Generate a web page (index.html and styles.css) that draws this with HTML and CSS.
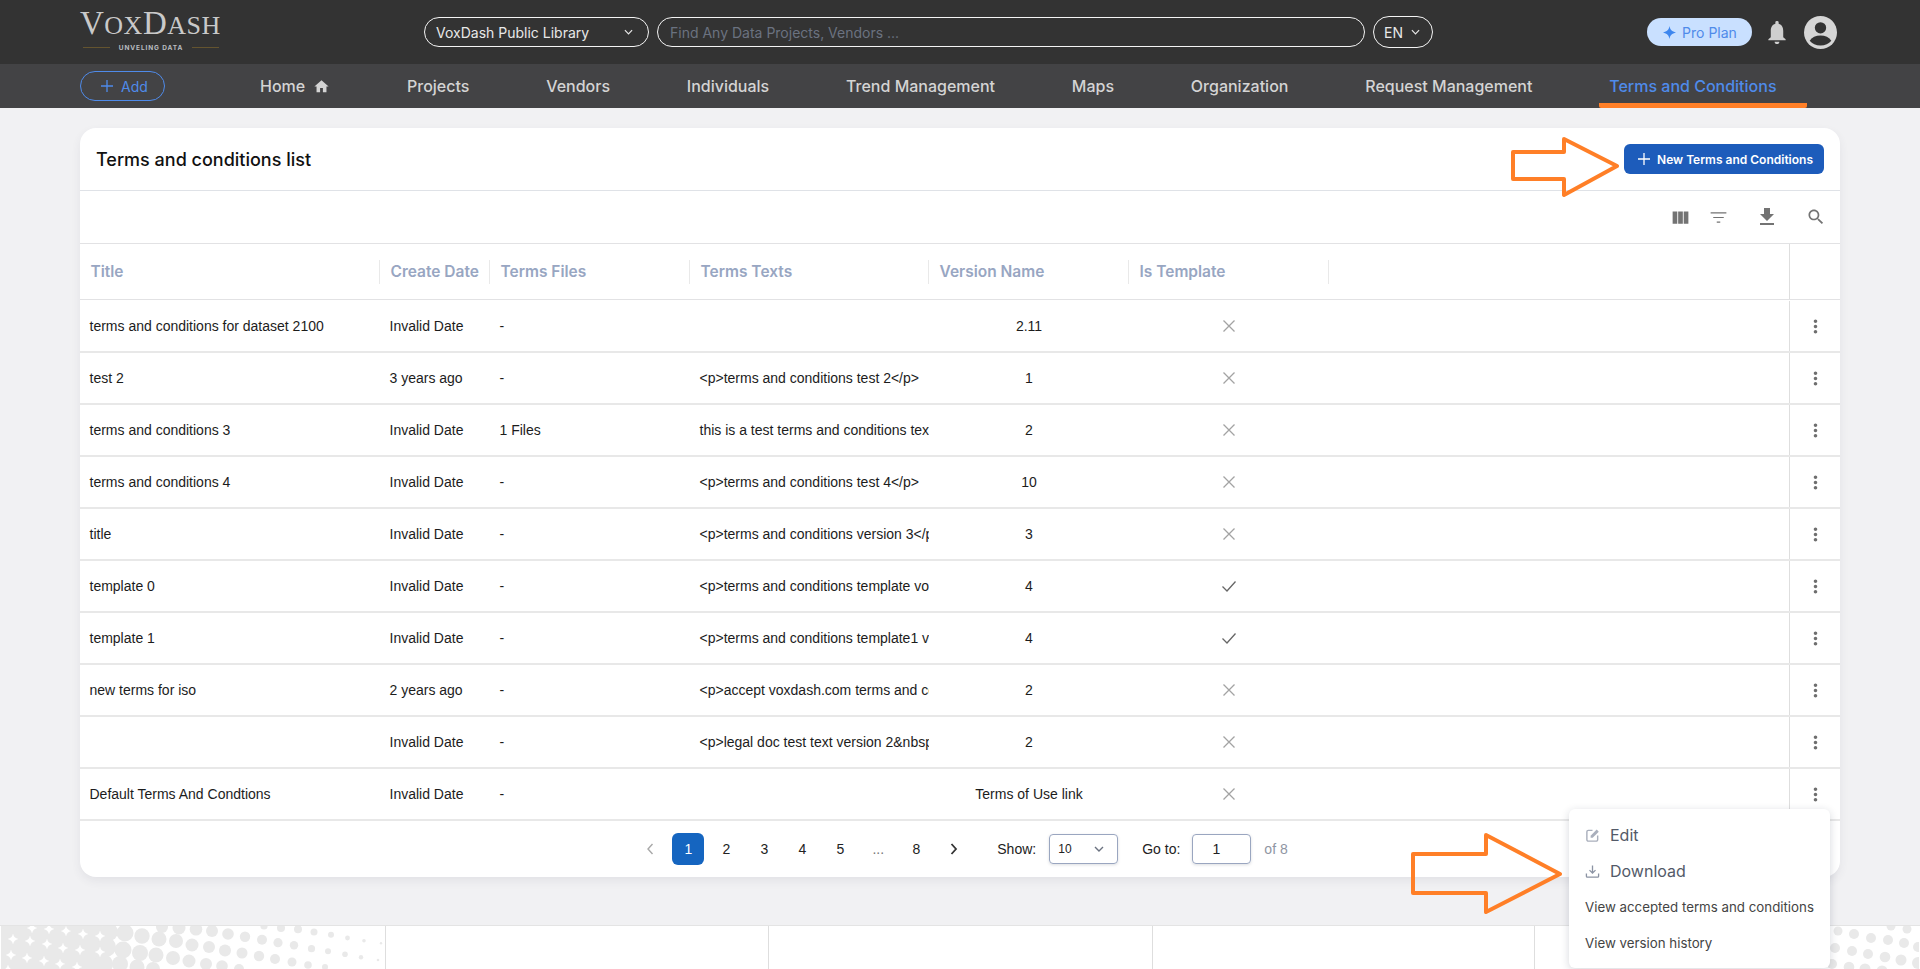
FILE: index.html
```html
<!DOCTYPE html>
<html lang="en">
<head>
<meta charset="utf-8">
<title>Terms and conditions list</title>
<link rel="stylesheet" href="styles.css">
</head>
<body>
<header class="topbar">
  <div class="logo">
    <div class="logo-word"><span class="logo-big">V</span>OX<span class="logo-big">D</span>ASH</div>
    <div class="logo-sub"><span class="logo-line"></span><span class="logo-tag">UNVELING DATA</span><span class="logo-line"></span></div>
  </div>
  <div class="pill pill-lib"><span>VoxDash Public Library</span><svg class="chev" viewBox="0 0 10 6"><path d="M1 1l4 4 4-4"/></svg></div>
  <div class="pill pill-search"><span class="placeholder">Find Any Data Projects, Vendors ...</span></div>
  <div class="pill pill-lang"><span>EN</span><svg class="chev" viewBox="0 0 10 6"><path d="M1 1l4 4 4-4"/></svg></div>
  <div class="top-right">
    <div class="pro"><svg class="pro-star" viewBox="0 0 14 14"><path d="M7 0c.7 4 2.500 6 7 7-4.500 1-6.300 3-7 7-.7-4-2.500-6-7-7 4.500-1 6.300-3 7-7z"/></svg>Pro Plan</div>
    <svg class="bell" viewBox="0 0 18 24"><path d="M9 24c1.400 0 2.500-1 2.500-2.400h-5C6.500 23 7.600 24 9 24zM15.500 17v-6.500c0-3.800-1.300-6.800-4.800-7.700V2A1.700 1.700 0 0 0 9 0a1.700 1.700 0 0 0-1.700 2v.8C3.800 3.700 2.500 6.700 2.500 10.500V17L0 19v1h18v-1z"/></svg>
    <svg class="avatar" viewBox="0 0 32 32"><circle cx="16" cy="16" r="16" fill="#d6d6d6"/><circle cx="16" cy="11.500" r="5.500" fill="#333"/><path d="M5.500 24c2-3.300 6-5 10.500-5s8.500 1.700 10.500 5c-2.500 3-6 4.600-10.500 4.600S8 27 5.500 24z" fill="#333"/></svg>
  </div>
</header>

<nav class="navbar">
  <div class="add-btn"><svg class="add-plus" viewBox="0 0 14 14"><path d="M7 1v12M1 7h12"/></svg>Add</div>
  <div class="nav-items">
    <a class="nav-item">Home<svg class="home" viewBox="0 0 24 24"><path d="M10 20v-6h4v6h5v-8h3L12 3 2 12h3v8z"/></svg></a>
    <a class="nav-item">Projects</a>
    <a class="nav-item">Vendors</a>
    <a class="nav-item">Individuals</a>
    <a class="nav-item">Trend Management</a>
    <a class="nav-item">Maps</a>
    <a class="nav-item">Organization</a>
    <a class="nav-item">Request Management</a>
    <a class="nav-item nav-active">Terms and Conditions</a>
  </div>
</nav>

<main class="main">
  <section class="card">
    <div class="card-head">
      <h1 class="card-title">Terms and conditions list</h1>
      <div class="new-btn"><svg class="new-plus" viewBox="0 0 14 14"><path d="M7 1v12M1 7h12"/></svg>New Terms and Conditions</div>
    </div>
    <div class="toolbar">
      <span class="tb tb-col"><svg viewBox="0 0 24 24" class="ic21"><path d="M14.670 5v14H9.330V5h5.340zm1 14H21V5h-5.330v14zm-7.340 0V5H3v14h5.330z"/></svg></span>
      <span class="tb tb-fil"><svg viewBox="0 0 24 24" class="ic21"><path d="M10 18h4v-1.300h-4zM3 6v1.300h18V6zm3 6.700h12v-1.400H6z"/></svg></span>
      <span class="tb tb-dl"><svg viewBox="0 0 24 24" class="ic24"><path d="M19 9h-4V3H9v6H5l7 7 7-7zM5 18v2h14v-2H5z"/></svg></span>
      <span class="tb tb-sr"><svg viewBox="0 0 24 24" class="ic20"><path d="M15.500 14h-.79l-.28-.27C15.410 12.590 16 11.110 16 9.500 16 5.910 13.090 3 9.500 3S3 5.910 3 9.500 5.910 16 9.500 16c1.610 0 3.090-.59 4.230-1.570l.27.28v.79l5 4.990L20.490 19l-4.990-5zm-6 0C7.010 14 5 11.990 5 9.500S7.010 5 9.500 5 14 7.010 14 9.500 11.990 14 9.500 14z"/></svg></span>
    </div>

    <div class="row row-head">
      <div class="th">Title</div><div class="th">Create Date</div><div class="th">Terms Files</div><div class="th">Terms Texts</div><div class="th">Version Name</div><div class="th">Is Template</div><div class="spacer"></div><div class="act"></div>
    </div>

    <div class="row"><div class="td">terms and conditions for dataset 2100</div><div class="td">Invalid Date</div><div class="td">-</div><div class="td"></div><div class="td center">2.11</div><div class="td center"><svg class="mark" viewBox="0 0 14 14"><path d="M1.500 1.500l11 11M12.500 1.500l-11 11"/></svg></div><div class="spacer"></div><div class="act"><svg class="dots" viewBox="0 0 24 24"><path d="M12 8c1.100 0 2-.9 2-2s-.9-2-2-2-2 .9-2 2 .9 2 2 2zm0 2c-1.100 0-2 .9-2 2s.9 2 2 2 2-.9 2-2-.9-2-2-2zm0 6c-1.100 0-2 .9-2 2s.9 2 2 2 2-.9 2-2-.9-2-2-2z"/></svg></div></div>
    <div class="row"><div class="td">test 2</div><div class="td">3 years ago</div><div class="td">-</div><div class="td">&lt;p&gt;terms and conditions test 2&lt;/p&gt;</div><div class="td center">1</div><div class="td center"><svg class="mark" viewBox="0 0 14 14"><path d="M1.500 1.500l11 11M12.500 1.500l-11 11"/></svg></div><div class="spacer"></div><div class="act"><svg class="dots" viewBox="0 0 24 24"><path d="M12 8c1.100 0 2-.9 2-2s-.9-2-2-2-2 .9-2 2 .9 2 2 2zm0 2c-1.100 0-2 .9-2 2s.9 2 2 2 2-.9 2-2-.9-2-2-2zm0 6c-1.100 0-2 .9-2 2s.9 2 2 2 2-.9 2-2-.9-2-2-2z"/></svg></div></div>
    <div class="row"><div class="td">terms and conditions 3</div><div class="td">Invalid Date</div><div class="td">1 Files</div><div class="td">this is a test terms and conditions text version 1</div><div class="td center">2</div><div class="td center"><svg class="mark" viewBox="0 0 14 14"><path d="M1.500 1.500l11 11M12.500 1.500l-11 11"/></svg></div><div class="spacer"></div><div class="act"><svg class="dots" viewBox="0 0 24 24"><path d="M12 8c1.100 0 2-.9 2-2s-.9-2-2-2-2 .9-2 2 .9 2 2 2zm0 2c-1.100 0-2 .9-2 2s.9 2 2 2 2-.9 2-2-.9-2-2-2zm0 6c-1.100 0-2 .9-2 2s.9 2 2 2 2-.9 2-2-.9-2-2-2z"/></svg></div></div>
    <div class="row"><div class="td">terms and conditions 4</div><div class="td">Invalid Date</div><div class="td">-</div><div class="td">&lt;p&gt;terms and conditions test 4&lt;/p&gt;</div><div class="td center">10</div><div class="td center"><svg class="mark" viewBox="0 0 14 14"><path d="M1.500 1.500l11 11M12.500 1.500l-11 11"/></svg></div><div class="spacer"></div><div class="act"><svg class="dots" viewBox="0 0 24 24"><path d="M12 8c1.100 0 2-.9 2-2s-.9-2-2-2-2 .9-2 2 .9 2 2 2zm0 2c-1.100 0-2 .9-2 2s.9 2 2 2 2-.9 2-2-.9-2-2-2zm0 6c-1.100 0-2 .9-2 2s.9 2 2 2 2-.9 2-2-.9-2-2-2z"/></svg></div></div>
    <div class="row"><div class="td">title</div><div class="td">Invalid Date</div><div class="td">-</div><div class="td">&lt;p&gt;terms and conditions version 3&lt;/p&gt;</div><div class="td center">3</div><div class="td center"><svg class="mark" viewBox="0 0 14 14"><path d="M1.500 1.500l11 11M12.500 1.500l-11 11"/></svg></div><div class="spacer"></div><div class="act"><svg class="dots" viewBox="0 0 24 24"><path d="M12 8c1.100 0 2-.9 2-2s-.9-2-2-2-2 .9-2 2 .9 2 2 2zm0 2c-1.100 0-2 .9-2 2s.9 2 2 2 2-.9 2-2-.9-2-2-2zm0 6c-1.100 0-2 .9-2 2s.9 2 2 2 2-.9 2-2-.9-2-2-2z"/></svg></div></div>
    <div class="row"><div class="td">template 0</div><div class="td">Invalid Date</div><div class="td">-</div><div class="td">&lt;p&gt;terms and conditions template voxdash&lt;/p&gt;</div><div class="td center">4</div><div class="td center"><svg class="mark check" viewBox="0 0 16 14"><path d="M1.500 7.500l4.500 4.500 8.500-9.500"/></svg></div><div class="spacer"></div><div class="act"><svg class="dots" viewBox="0 0 24 24"><path d="M12 8c1.100 0 2-.9 2-2s-.9-2-2-2-2 .9-2 2 .9 2 2 2zm0 2c-1.100 0-2 .9-2 2s.9 2 2 2 2-.9 2-2-.9-2-2-2zm0 6c-1.100 0-2 .9-2 2s.9 2 2 2 2-.9 2-2-.9-2-2-2z"/></svg></div></div>
    <div class="row"><div class="td">template 1</div><div class="td">Invalid Date</div><div class="td">-</div><div class="td">&lt;p&gt;terms and conditions template1 version&lt;/p&gt;</div><div class="td center">4</div><div class="td center"><svg class="mark check" viewBox="0 0 16 14"><path d="M1.500 7.500l4.500 4.500 8.500-9.500"/></svg></div><div class="spacer"></div><div class="act"><svg class="dots" viewBox="0 0 24 24"><path d="M12 8c1.100 0 2-.9 2-2s-.9-2-2-2-2 .9-2 2 .9 2 2 2zm0 2c-1.100 0-2 .9-2 2s.9 2 2 2 2-.9 2-2-.9-2-2-2zm0 6c-1.100 0-2 .9-2 2s.9 2 2 2 2-.9 2-2-.9-2-2-2z"/></svg></div></div>
    <div class="row"><div class="td">new terms for iso</div><div class="td">2 years ago</div><div class="td">-</div><div class="td">&lt;p&gt;accept voxdash.com terms and conditions&lt;/p&gt;</div><div class="td center">2</div><div class="td center"><svg class="mark" viewBox="0 0 14 14"><path d="M1.500 1.500l11 11M12.500 1.500l-11 11"/></svg></div><div class="spacer"></div><div class="act"><svg class="dots" viewBox="0 0 24 24"><path d="M12 8c1.100 0 2-.9 2-2s-.9-2-2-2-2 .9-2 2 .9 2 2 2zm0 2c-1.100 0-2 .9-2 2s.9 2 2 2 2-.9 2-2-.9-2-2-2zm0 6c-1.100 0-2 .9-2 2s.9 2 2 2 2-.9 2-2-.9-2-2-2z"/></svg></div></div>
    <div class="row"><div class="td"></div><div class="td">Invalid Date</div><div class="td">-</div><div class="td">&lt;p&gt;legal doc test text version 2&amp;nbsp;&lt;/p&gt;</div><div class="td center">2</div><div class="td center"><svg class="mark" viewBox="0 0 14 14"><path d="M1.500 1.500l11 11M12.500 1.500l-11 11"/></svg></div><div class="spacer"></div><div class="act"><svg class="dots" viewBox="0 0 24 24"><path d="M12 8c1.100 0 2-.9 2-2s-.9-2-2-2-2 .9-2 2 .9 2 2 2zm0 2c-1.100 0-2 .9-2 2s.9 2 2 2 2-.9 2-2-.9-2-2-2zm0 6c-1.100 0-2 .9-2 2s.9 2 2 2 2-.9 2-2-.9-2-2-2z"/></svg></div></div>
    <div class="row"><div class="td">Default Terms And Condtions</div><div class="td">Invalid Date</div><div class="td">-</div><div class="td"></div><div class="td center">Terms of Use link</div><div class="td center"><svg class="mark" viewBox="0 0 14 14"><path d="M1.500 1.500l11 11M12.500 1.500l-11 11"/></svg></div><div class="spacer"></div><div class="act"><svg class="dots" viewBox="0 0 24 24"><path d="M12 8c1.100 0 2-.9 2-2s-.9-2-2-2-2 .9-2 2 .9 2 2 2zm0 2c-1.100 0-2 .9-2 2s.9 2 2 2 2-.9 2-2-.9-2-2-2zm0 6c-1.100 0-2 .9-2 2s.9 2 2 2 2-.9 2-2-.9-2-2-2z"/></svg></div></div>

    <div class="pager">
      <span class="pg pg-prev"><svg class="pg-arrow" viewBox="0 0 8 12"><path d="M6.500 1L2 6l4.500 5"/></svg></span>
      <span class="pg pg-on">1</span><span class="pg">2</span><span class="pg">3</span><span class="pg">4</span><span class="pg">5</span><span class="pg pg-dim">...</span><span class="pg">8</span>
      <span class="pg pg-next"><svg class="pg-arrow" viewBox="0 0 8 12"><path d="M1.500 1L6 6l-4.500 5"/></svg></span>
      <span class="pg-label pg-show">Show:</span>
      <span class="pg-select"><span>10</span><svg class="pg-chev" viewBox="0 0 10 6"><path d="M1 1l4 4 4-4"/></svg></span>
      <span class="pg-label pg-goto">Go to:</span>
      <span class="pg-input">1</span>
      <span class="pg-of">of 8</span>
    </div>
  </section>
</main>

<footer class="footer">
  <div class="foot-cell">
    <svg class="foot-art" viewBox="0 0 384 44">
      <g fill="#e9e9e9">
        <rect x="1" y="0" width="101" height="44"/>
        <circle cx="109" cy="6" r="9"/><circle cx="106" cy="21" r="10"/><circle cx="103" cy="38" r="10"/>
        <circle cx="125" cy="7" r="8.500"/><circle cx="142" cy="10" r="7.700"/><circle cx="159" cy="13" r="7.500"/><circle cx="176" cy="15" r="7"/><circle cx="192" cy="19" r="6.500"/><circle cx="209" cy="21" r="6"/><circle cx="225" cy="24.500" r="6"/><circle cx="242" cy="27" r="5.500"/><circle cx="259" cy="30" r="5.200"/><circle cx="275" cy="33" r="5"/><circle cx="292" cy="36" r="4.500"/><circle cx="308" cy="39" r="3.800"/><circle cx="325" cy="41" r="3"/>
        <circle cx="123" cy="24" r="8.500"/><circle cx="140" cy="27" r="8"/><circle cx="156" cy="29" r="7.500"/><circle cx="173" cy="32" r="7"/><circle cx="189" cy="35" r="6.500"/><circle cx="206" cy="38" r="6"/><circle cx="222" cy="40" r="5.800"/><circle cx="239" cy="43" r="5"/>
        <circle cx="120" cy="38" r="8"/><circle cx="137" cy="41" r="7.500"/><circle cx="153" cy="43" r="7"/>
        <circle cx="162" cy="1" r="6"/><circle cx="179" cy="2" r="6.500"/><circle cx="196" cy="3.300" r="6.300"/><circle cx="212" cy="5" r="6"/><circle cx="228" cy="8" r="5.800"/><circle cx="245" cy="10.700" r="5.200"/><circle cx="262" cy="13.700" r="5"/><circle cx="278" cy="16.700" r="4.600"/><circle cx="294" cy="19.300" r="4.200"/><circle cx="311.500" cy="22.700" r="3.600"/><circle cx="328" cy="25.300" r="3"/><circle cx="345" cy="28.300" r="2.800"/><circle cx="361" cy="31.300" r="2.200"/><circle cx="378" cy="34" r="1.300"/>
        <circle cx="264" cy="0" r="3.600"/><circle cx="281" cy="2" r="4"/><circle cx="298" cy="3.300" r="4"/><circle cx="314" cy="6" r="3.500"/><circle cx="331" cy="8.700" r="3"/><circle cx="347.500" cy="12" r="2.400"/><circle cx="364" cy="14.700" r="1.800"/><circle cx="381" cy="17.300" r="1.200"/>
      </g>
      <defs><path id="star" d="M0-5.500Q.8-.8 5.500 0 .8.8 0 5.500-.8.8-5.500 0-.8-.8 0-5.500z" fill="#fff"/></defs>
      <use href="#star" x="13" y="13"/><use href="#star" x="30" y="15"/><use href="#star" x="47" y="18"/><use href="#star" x="63" y="22"/><use href="#star" x="80" y="24"/><use href="#star" x="100" y="26"/>
      <use href="#star" x="11" y="29"/><use href="#star" x="27" y="32"/><use href="#star" x="44" y="35"/><use href="#star" x="60" y="38"/><use href="#star" x="77" y="41"/>
      <use href="#star" x="32" y="2"/><use href="#star" x="49" y="3"/><use href="#star" x="66" y="5"/><use href="#star" x="83" y="8"/><use href="#star" x="100" y="10"/><use href="#star" x="8" y="44"/>
    </svg>
  </div>
  <div class="foot-cell"></div>
  <div class="foot-cell"></div>
  <div class="foot-cell"></div>
  <div class="foot-cell">
    <svg class="foot-art" viewBox="0 0 384 44">
      <g fill="#e9e9e9">
        <circle cx="356" cy="0" r="4.500"/><circle cx="372" cy="3" r="4.500"/>
        <circle cx="303" cy="5" r="4.500"/><circle cx="319" cy="8" r="5"/><circle cx="336" cy="12" r="5"/><circle cx="353" cy="14" r="5"/><circle cx="369" cy="17" r="5"/><circle cx="383" cy="21" r="5"/>
        <circle cx="300" cy="22" r="5"/><circle cx="317" cy="25" r="5"/><circle cx="333" cy="28" r="5"/><circle cx="350" cy="31" r="5.300"/><circle cx="366" cy="34" r="5.500"/><circle cx="383" cy="37" r="6"/>
        <circle cx="297" cy="38" r="5"/><circle cx="314" cy="41" r="5.300"/><circle cx="330" cy="43" r="5.500"/><circle cx="347" cy="45" r="5.500"/>
      </g>
    </svg>
  </div>
</footer>

<div class="menu">
  <div class="menu-item menu-big"><svg class="menu-ic" viewBox="0 0 16 16"><path d="M8 2.500H3.500a1.500 1.500 0 0 0-1.500 1.500v8.500a1.500 1.500 0 0 0 1.500 1.500H12a1.500 1.500 0 0 0 1.500-1.500V8" fill="none" stroke="#a9afbc" stroke-width="1.500"/><path d="M6 10.500V8.200L12.500 1.700l2.200 2.200L8.200 10.500z" fill="#a9afbc"/></svg>Edit</div>
  <div class="menu-item menu-big"><svg class="menu-ic" viewBox="0 0 16 16"><path d="M8 1.500v8M4.800 6.500L8 9.700l3.200-3.200M1.500 10v3a1 1 0 0 0 1 1h11a1 1 0 0 0 1-1v-3" fill="none" stroke="#8b93a3" stroke-width="1.400"/></svg>Download</div>
  <div class="menu-item">View accepted terms and conditions</div>
  <div class="menu-item">View version history</div>
</div>

<svg class="arrow arrow-top" viewBox="0 0 112 64"><path d="M3 16h51V3l53 27-53 29V43H3z"/></svg>
<svg class="arrow arrow-bottom" viewBox="0 0 156 84"><path d="M3 22h73V3l74 39-74 38V61H3z"/></svg>
</body>
</html>
```

FILE: styles.css
```css
* { box-sizing: border-box; }
html { height: 969px; overflow: hidden; }
html, body { margin: 0; padding: 0; }
body {
  width: 1920px;
  height: 969px;
  overflow: hidden;
  position: relative;
  background: #f1f1f3;
  font-family: "Liberation Sans", Arial, sans-serif;
  color: #222;
}

.topbar {
  height: 64px;
  background: #333333;
  display: flex;
  align-items: center;
  padding: 0 83px 0 80px;
  font-family: Inter, sans-serif;
}
.logo { width: 344px; flex: none; color: #c9c9c9; }
.logo-word {
  font-family: "Liberation Serif", serif;
  font-size: 26px;
  line-height: 32px;
  letter-spacing: .5px;
  margin-top: -4px;
  white-space: nowrap;
}
.logo-big { font-size: 33px; }
.logo-sub { display: flex; align-items: center; width: 141px; height: 11px; gap: 9px; padding: 0 2px 0 3px; }
.logo-tag { font-size: 6.500px; font-weight: 700; letter-spacing: .9px; color: #b9bcc0; white-space: nowrap; }
.logo-line { flex: 1; height: 1px; background: #64542f; }

.pill {
  height: 30px;
  border: 1px solid #f4f4f4;
  border-radius: 15px;
  display: flex;
  align-items: center;
  font-size: 14px;
  color: #e8e8e8;
}
.pill-lib { width: 225px; padding: 0 15px 0 11px; justify-content: space-between; flex: none; }
.pill-search { width: 708px; margin-left: 8px; padding: 0 12px; flex: none; }
.pill-lang { width: 60px; height: 32px; border-radius: 16px; margin-left: 8px; padding: 0 12px 0 10px; justify-content: space-between; flex: none; }
.placeholder { color: #6b7280; }
.chev { width: 9px; height: 6px; fill: none; stroke: #e8e8e8; stroke-width: 1.300; }

.top-right { margin-left: auto; display: flex; align-items: center; }
.pro {
  width: 105px;
  height: 28px;
  border-radius: 14px;
  background: #c9e0ff;
  color: #4f8bea;
  font-size: 14px;
  display: flex;
  align-items: center;
  justify-content: center;
  gap: 6px;
  padding-left: 1px;
}
.pro-star { width: 13px; height: 13px; fill: #3d86ee; }
.bell { width: 18px; height: 23px; fill: #cfcfcf; margin-left: 16px; }
.avatar { width: 33px; height: 33px; margin-left: 18px; }

.navbar {
  height: 44px;
  background: #434345;
  display: flex;
  align-items: stretch;
  padding-left: 80px;
  font-family: Inter, sans-serif;
}
.add-btn {
  width: 85px;
  height: 30px;
  margin-top: 7px;
  border: 1px solid #4f8bea;
  border-radius: 15px;
  color: #4f8bea;
  font-size: 14px;
  display: flex;
  align-items: center;
  justify-content: center;
  gap: 7px;
  padding-left: 3px;
}
.add-plus { width: 14px; height: 14px; fill: none; stroke: #4f8bea; stroke-width: 1.300; }
.nav-items { display: flex; margin-left: 85px; gap: 56.800px; }
.nav-item {
  padding: 0 10px;
  display: flex;
  align-items: center;
  gap: 8px;
  font-size: 16px;
  font-weight: 500;
  color: #d4d4d4;
  white-space: nowrap;
}
.home { width: 17px; height: 17px; fill: #d4d4d4; }
.nav-active {
  color: #4f8bea;
  padding-right: 30px;
  border-bottom: 5px solid #ff7f27;
  border-radius: 0 0 2px 2px;
  padding-top: 5px;
}

.main { padding: 20px 80px 0; }
.card {
  height: 749px;
  background: #fff;
  border-radius: 16px;
  box-shadow: 0 4px 10px rgba(60, 70, 90, .08);
}
.card-head {
  height: 63px;
  border-bottom: 1px solid #dfe2e7;
  display: flex;
  align-items: center;
  justify-content: space-between;
  padding: 0 16px;
}
.card-title { margin: 0; font-size: 18px; font-weight: 500; font-family: Inter, sans-serif; color: #111; }
.new-btn {
  width: 200px;
  height: 30px;
  background: #1d5cbb;
  border-radius: 6px;
  color: #fff;
  font-family: Inter, sans-serif;
  font-size: 12px;
  font-weight: 600;
  display: flex;
  align-items: center;
  justify-content: flex-end;
  gap: 6px;
  padding-right: 11px;
}
.new-plus { width: 14px; height: 14px; fill: none; stroke: #fff; stroke-width: 1.300; }

.toolbar {
  height: 53px;
  border-bottom: 1px solid #e2e2e4;
  display: flex;
  justify-content: flex-end;
  align-items: center;
}
.tb { display: flex; justify-content: center; align-items: center; }
.tb svg { fill: #737373; }
.tb-col { width: 28px; }
.tb-fil { width: 48px; }
.tb-dl { width: 50px; }
.tb-sr { width: 48px; }
.ic21 { width: 21px; height: 21px; }
.ic24 { width: 24px; height: 24px; }
.ic20 { width: 20px; height: 20px; }

.row {
  display: grid;
  grid-template-columns: 300px 110px 200px 239px 200px 200px 460px 51px;
  height: 52px;
  border-bottom: 2px solid #e8e8e8;
  align-items: stretch;
}
.row-head { height: 56px; margin-bottom: 1px; border-bottom: 1px solid #e2e2e4; }
.th {
  align-self: center;
  height: 24px;
  line-height: 24px;
  padding-left: 10.500px;
  border-right: 1px solid #e9e9e9;
  font-family: Inter, sans-serif;
  font-size: 15.500px;
  font-weight: 600;
  color: #98a6c2;
  white-space: nowrap;
}
.td {
  display: flex;
  align-items: center;
  padding-left: 9.500px;
  font-size: 14px;
  color: #1c1c1c;
  white-space: nowrap;
  overflow: hidden;
}
.row .td.center { padding-left: 0; justify-content: center; }
.act {
  border-left: 1px solid #dedede;
  display: flex;
  align-items: center;
  justify-content: center;
}
.dots { width: 21px; height: 21px; fill: #6e6e6e; }
.mark { width: 14px; height: 14px; fill: none; stroke: #a3a3a3; stroke-width: 1.300; }
.check { width: 16px; stroke: #666; }

.pager {
  height: 56px;
  display: flex;
  align-items: center;
  justify-content: center;
  padding-left: 2px;
  font-size: 14px;
  color: #222;
}
.pg {
  width: 32px;
  height: 32px;
  margin-right: 6px;
  border-radius: 6px;
  display: flex;
  align-items: center;
  justify-content: center;
}
.pg-on { background: #1565c0; color: #fff; }
.pg-dim { color: #777; }
.pg-next { margin-right: 0; }
.pg-arrow { width: 8px; height: 12px; fill: none; stroke: #333; stroke-width: 1.800; }
.pg-prev .pg-arrow { stroke: #a8a8a8; stroke-width: 1.400; }
.pg-show { margin-left: 27px; }
.pg-select {
  width: 69px;
  height: 30px;
  margin-left: 13px;
  border: 1px solid #9aa6c0;
  border-radius: 4px;
  box-shadow: 0 1px 3px rgba(60, 70, 90, .18);
  display: flex;
  align-items: center;
  justify-content: space-between;
  padding: 0 13px 0 8px;
  font-size: 12px;
}
.pg-chev { width: 10px; height: 6px; fill: none; stroke: #6b7280; stroke-width: 1.400; }
.pg-goto { margin-left: 24px; }
.pg-input {
  width: 59px;
  height: 30px;
  margin-left: 12px;
  border: 1px solid #9aa6c0;
  border-radius: 4px;
  box-shadow: 0 1px 3px rgba(60, 70, 90, .18);
  display: flex;
  align-items: center;
  justify-content: center;
  padding-right: 11px;
}
.pg-of { margin-left: 13px; color: #8f96a3; }

.footer {
  margin-top: 48px;
  height: 44px;
  display: grid;
  grid-template-columns: 386px 383px 384px 382px 385px;
  border-top: 1px solid #e4e4e4;
  background: #fff;
  overflow: hidden;
}
.foot-cell { border-right: 1px solid #dedede; min-width: 0; }
.foot-cell:last-child { border-right: 0; }
.foot-art { display: block; width: 384px; height: 44px; }

.menu {
  position: absolute;
  left: 1569px;
  top: 809px;
  width: 261px;
  height: 159px;
  padding-top: 8px;
  background: #fff;
  border-radius: 6px;
  box-shadow: 0 2px 8px rgba(30, 40, 60, .18);
  font-family: Inter, sans-serif;
}
.menu-item {
  height: 36px;
  display: flex;
  align-items: center;
  padding-left: 16px;
  font-size: 13.300px;
  color: #444;
  white-space: nowrap;
}
.menu-big { font-size: 16px; color: #535a68; gap: 10px; }
.menu-ic { width: 15px; height: 15px; flex: none; }

.arrow {
  position: absolute;
  fill: none;
  stroke: #ff7f27;
  stroke-width: 4;
  stroke-linejoin: round;
}
.arrow-top { left: 1510px; top: 136px; width: 112px; height: 64px; }
.arrow-bottom { left: 1410px; top: 832px; width: 156px; height: 84px; }
```
